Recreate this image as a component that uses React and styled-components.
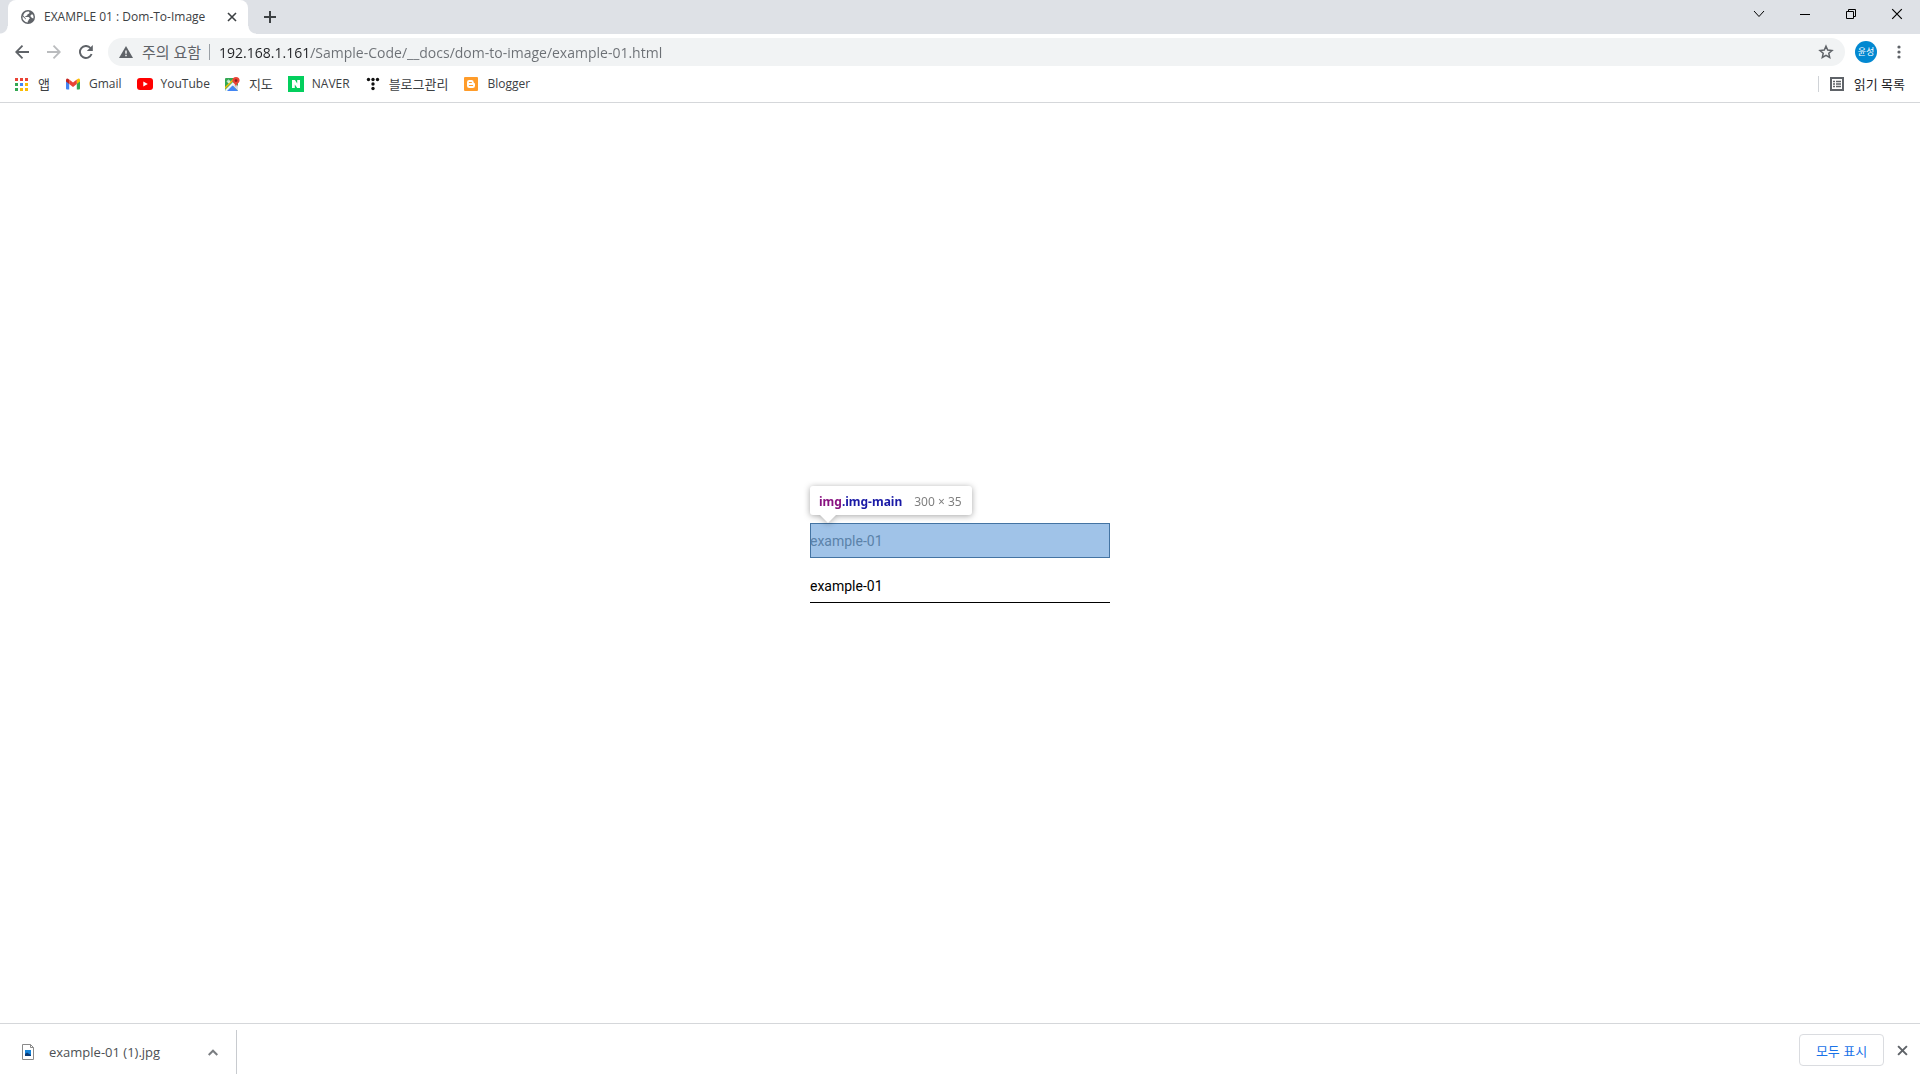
import React from "react"
import styled, { createGlobalStyle } from "styled-components"

const GlobalStyle = createGlobalStyle`
  * {
    box-sizing: border-box;
  }

  body {
    margin: 0;
    background: #ffffff;
    font-family: "Open Sans", "Noto Sans CJK KR", sans-serif;
    font-size: 12px;
    color: #3c4043;
  }

  button, input {
    font: inherit;
    color: inherit;
    border: 0;
    padding: 0;
    background: none;
  }

  svg {
    display: block;
    flex: none;
  }
`

const Window = styled.div`
  display: flex;
  flex-direction: column;
  min-height: 100vh;
`

const TabStrip = styled.header`
  display: flex;
  align-items: stretch;
  height: 34px;
  padding-left: 8px;
  background: #dee1e6;
`

const Tab = styled.div`
  position: relative;
  display: flex;
  align-items: center;
  width: 240px;
  padding: 0 9px 0 13px;
  border-radius: 8px 8px 0 0;
  background: #ffffff;

  /* flared feet on both sides of the active tab */
  &::before,
  &::after {
    content: "";
    position: absolute;
    bottom: 0;
    width: 8px;
    height: 8px;
  }
  &::before {
    right: 100%;
    background: radial-gradient(circle at 0 0, #dee1e6 7px, #ffffff 8px);
  }
  &::after {
    left: 100%;
    background: radial-gradient(circle at 100% 0, #dee1e6 7px, #ffffff 8px);
  }

  .title {
    flex: 1;
    margin-left: 9px;
    line-height: 18px;
    white-space: nowrap;
    overflow: hidden;
  }
`

const IconButton = styled.button`
  display: flex;
  align-items: center;
  justify-content: center;
  flex: none;
  width: ${({ $size }) => $size || 32}px;
  height: ${({ $size }) => $size || 32}px;
  color: ${({ $color }) => $color || "#5f6368"};
`

const WindowControls = styled.div`
  display: flex;
  align-items: center;
  margin-left: auto;

  button {
    width: 46px;
    height: 28px;
    margin-bottom: 6px;
    color: #000000;
  }
`

const NewTab = styled(IconButton)`
  margin-left: 8px;
  align-self: center;
  width: 28px;
  color: #3c4043;
`

const Toolbar = styled.div`
  display: flex;
  align-items: center;
  height: 36px;
  padding: 0 5px 0 6px;
`

const Omnibox = styled.div`
  display: flex;
  flex: 1;
  align-items: center;
  height: 28px;
  margin: 0 10px 0 6px;
  padding: 0 7px 0 11px;
  border-radius: 14px;
  background: #f1f3f4;
  color: #5f6368;

  .warning {
    padding: 0 8px 0 9px;
    font-size: 15px;
    line-height: 24px;
    white-space: nowrap;
  }

  .divider {
    width: 1px;
    height: 16px;
    margin-right: 9px;
    background: #9aa0a6;
  }
`

/* the host part is dark, the path after it is grey */
const Address = styled.input`
  flex: 1;
  min-width: 0;
  font-size: 14px;
  background: linear-gradient(to right, #202124 92px, #6b6f74 92px);
  background-clip: text;
  color: transparent;
  outline: none;
`

const Avatar = styled.button`
  flex: none;
  width: 22px;
  height: 22px;
  margin-right: 6px;
  border-radius: 50%;
  background: #0288d1;
  color: #ffffff;
  font-size: 9px;
  line-height: 22px;
  text-align: center;
`

const BookmarkBar = styled.nav`
  display: flex;
  align-items: center;
  height: 33px;
  padding: 0 15px 4px 14px;
  border-bottom: 1px solid #d5d7da;

  .divider {
    width: 1px;
    height: 16px;
    margin: 0 11px 0 auto;
    background: #d0d3d7;
  }
`

const Bookmark = styled.a`
  display: flex;
  align-items: center;
  gap: 8px;
  margin-right: 15px;
  color: #3c4043;
  line-height: 18px;
  text-decoration: none;
  white-space: nowrap;

  &:lang(ko) {
    font-size: 13px;
  }

  .icon {
    display: flex;
    justify-content: center;
    width: 16px;
  }
`

const ReadingList = styled.button`
  display: flex;
  align-items: center;
  gap: 10px;
  font-size: 13px;
  line-height: 18px;
  color: #202124;
`

const Page = styled.main`
  display: flex;
  flex: 1;
  flex-direction: column;
  align-items: center;
  justify-content: center;
  gap: 10px;
  font-family: Roboto, sans-serif;
  font-size: 14px;
  color: #000000;
`

const Sample = styled.div`
  position: relative;
  width: 300px;
  height: 35px;
  line-height: 36px;
  border-bottom: 1px solid #000000;
`

const Highlight = styled(Sample)`
  background: #a0c3e8;
  box-shadow: inset 0 0 0 1px #4474a3;
  border-bottom: 0;
  color: #5b82a9;
`

const Tooltip = styled.div`
  position: absolute;
  left: 0;
  bottom: 43px;
  display: flex;
  gap: 12px;
  height: 29px;
  padding: 0 10px 0 9px;
  border-radius: 3px;
  background: #ffffff;
  filter: drop-shadow(0 1px 3px rgba(0, 0, 0, 0.35));
  font-family: "Noto Sans", sans-serif;
  font-size: 12px;
  line-height: 32px;
  white-space: nowrap;
  color: #808080;

  &::after {
    content: "";
    position: absolute;
    top: 100%;
    left: 10px;
    border: 8px solid transparent;
    border-top-color: #ffffff;
    border-bottom: 0;
  }

  b {
    color: #1a1aa6;
  }

  .tag {
    color: #881280;
  }
`

const DownloadShelf = styled.footer`
  display: flex;
  align-items: center;
  height: 57px;
  padding-right: 8px;
  border-top: 1px solid #d5d7da;
`

const Download = styled.div`
  display: flex;
  align-items: center;
  width: 237px;
  height: 44px;
  padding: 0 12px 0 22px;
  border-right: 1px solid #c8cbcf;
  font-size: 13px;

  a {
    display: flex;
    flex: 1;
    align-items: center;
    gap: 15px;
    color: #4c5054;
    text-decoration: none;
  }
`

const ShelfActions = styled.div`
  display: flex;
  align-items: center;
  gap: 8px;
  margin: 0 0 4px auto;
`

const ShowAll = styled.button`
  width: 85px;
  height: 32px;
  border: 1px solid #dadce0;
  border-radius: 4px;
  color: #1a73e8;
  font-size: 13px;
`

const Cross = ({ size, width }) => (
  <svg width={size} height={size} viewBox="0 0 10 10" stroke="currentColor" strokeWidth={width}>
    <path d="M1 1l8 8M9 1l-8 8" />
  </svg>
)

const Globe = () => (
  <svg width="14" height="14" viewBox="0 0 14 14">
    <circle cx="7" cy="7" r="7" fill="#5f6368" />
    <path d="M7.800 1.600Q9 2 8.200 3.600L6.600 4.200 6.200 5.600 4.300 6.200V7H7.600Q8.800 7.400 8.800 9H8Q8 10.500 6.800 11v1.400A5.500 5.500 0 0 1 1.500 6.200L4.800 9.600V8.400L2.200 5.600A5.500 5.500 0 0 1 7.800 1.600Z" fill="#fff" />
    <path d="M9.600 5.400l1.200-1.200 1.200.6.500 2-.2 1.800-1.200-.6-1.500-1.200z" fill="#fff" />
  </svg>
)

const Apps = () => (
  <svg width="14" height="14" viewBox="0 0 14 14">
    {["#ea4335", "#ea4335", "#ea4335", "#34a853", "#4285f4", "#fbbc04", "#34a853", "#fbbc04", "#fbbc04"].map((fill, i) => (
      <rect key={i} x={(i % 3) * 5} y={Math.floor(i / 3) * 5 + 1} width="3" height="3" fill={fill} />
    ))}
  </svg>
)

const Gmail = () => (
  <svg width="14" height="12" viewBox="0 0 14 12">
    <path d="M0 2v8.500Q0 11.500 1 11.500h2.200V4z" fill="#4285f4" />
    <path d="M14 2v8.500q0 1-1 1h-2.200V4z" fill="#34a853" />
    <path d="M10.800 1.600L12 .8Q14 0 14 2.300v1.200L10.800 6z" fill="#fbbc04" />
    <path d="M3.200 1.600L2 .8Q0 0 0 2.300v1.200L3.200 6z" fill="#c5221f" />
    <path d="M3.200 1.600L7 4.600l3.800-3V6L7 9 3.200 6z" fill="#ea4335" />
  </svg>
)

const YouTube = () => (
  <svg width="16" height="12" viewBox="0 0 16 12">
    <rect width="16" height="12" rx="3" fill="#ff0000" />
    <path d="M6.300 3.400v5.200L10.800 6z" fill="#fff" />
  </svg>
)

const Maps = () => (
  <svg width="15" height="14" viewBox="0 0 15 14">
    <rect y="1" width="13" height="13" rx="1" fill="#34a853" />
    <path d="M7 8l3-2 3 3v5z" fill="#dadce0" />
    <path d="M0 12L11 1H9L0 10z" fill="#fbbc04" />
    <path d="M0 13L8 5l2 2-7 7H1Q0 14 0 13z" fill="#f1f3f4" />
    <path d="M2 14L7.500 8.500 13 14z" fill="#4285f4" />
    <path d="M5.300 4.200H3.700v1h.8A1.200 1.200 0 1 1 4.300 3.500" stroke="#fff" fill="none" />
    <path d="M11 0a3.600 3.600 0 0 1 3.600 3.600C14.600 6 11.600 6.500 11 10 10.400 6.500 7.400 6 7.400 3.600A3.600 3.600 0 0 1 11 0z" fill="#ea4335" />
    <circle cx="11" cy="3.600" r="1.300" fill="#8c1d18" />
  </svg>
)

const Naver = () => (
  <svg width="16" height="16" viewBox="0 0 16 16">
    <rect width="16" height="16" fill="#03cf5d" />
    <path d="M4 4h3l2.200 3.500V4h2.800v8H9.200L6.800 8.500V12H4z" fill="#fff" />
  </svg>
)

const Tistory = () => (
  <svg width="14" height="14" viewBox="0 0 14 14" fill="#111">
    {[[2.500, 2.500], [7, 2.500], [11.500, 2.500], [7, 7], [7, 11.500]].map(([x, y]) => (
      <circle key={`${x}-${y}`} cx={x} cy={y} r="1.700" />
    ))}
  </svg>
)

const Blogger = () => (
  <svg width="14" height="14" viewBox="0 0 14 14">
    <rect width="14" height="14" rx="1" fill="#ff9c2a" />
    <path d="M5.200 3h2.300a2.200 2.200 0 0 1 2.200 2.200q0 1 1.300 1.300v2.300A2.200 2.200 0 0 1 8.800 11H5.200A2.200 2.200 0 0 1 3 8.800V5.200A2.200 2.200 0 0 1 5.200 3z" fill="#fff" />
    <path d="M5.400 5.500h2M5.400 8.500h3.200" stroke="#ff9c2a" strokeWidth="1.200" strokeLinecap="round" />
  </svg>
)

const bookmarks = [
  { label: "앱", lang: "ko", icon: <Apps /> },
  { label: "Gmail", lang: "en", icon: <Gmail /> },
  { label: "YouTube", lang: "en", icon: <YouTube /> },
  { label: "지도", lang: "ko", icon: <Maps /> },
  { label: "NAVER", lang: "en", icon: <Naver /> },
  { label: "블로그관리", lang: "ko", icon: <Tistory /> },
  { label: "Blogger", lang: "en", icon: <Blogger /> },
]

const App = () => {
  return (
    <Window>
      <GlobalStyle />
      <TabStrip>
        <Tab>
          <Globe />
          <span className="title">EXAMPLE 01 : Dom-To-Image</span>
          <IconButton $size={14} $color="#3c4043" aria-label="Close tab">
            <Cross size={10} width={1.600} />
          </IconButton>
        </Tab>
        <NewTab aria-label="New tab">
          <svg width="12" height="12" viewBox="0 0 12 12" stroke="currentColor" strokeWidth="2">
            <path d="M6 0v12M0 6h12" />
          </svg>
        </NewTab>
        <WindowControls>
          <IconButton aria-label="Search tabs">
            <svg width="12" height="8" viewBox="0 0 12 8" fill="none" stroke="currentColor">
              <path d="M1 1l5 5.500L11 1" />
            </svg>
          </IconButton>
          <IconButton aria-label="Minimize">
            <svg width="10" height="1" viewBox="0 0 10 1">
              <path d="M0 0h10v1H0z" />
            </svg>
          </IconButton>
          <IconButton aria-label="Restore">
            <svg width="10" height="10" viewBox="0 0 10 10" fill="none" stroke="currentColor">
              <path d="M.5 2.500h7v7h-7zM2.500 2.500v-2h7v7h-2" />
            </svg>
          </IconButton>
          <IconButton aria-label="Close">
            <Cross size={12} width={1} />
          </IconButton>
        </WindowControls>
      </TabStrip>

      <Toolbar>
        <IconButton aria-label="Back">
          <svg width="14" height="14" viewBox="0 0 14 14" fill="none" stroke="currentColor" strokeWidth="1.800">
            <path d="M14 7H1.500M7.500 .7L1.200 7l6.300 6.300" />
          </svg>
        </IconButton>
        <IconButton $color="#babcbe" aria-label="Forward">
          <svg width="14" height="14" viewBox="0 0 14 14" fill="none" stroke="currentColor" strokeWidth="1.800">
            <path d="M0 7h12.500M6.500 .7L12.800 7l-6.300 6.300" />
          </svg>
        </IconButton>
        <IconButton aria-label="Reload">
          <svg width="14" height="14" viewBox="0 0 14 14">
            <path d="M12.600 9A6 6 0 1 1 11.500 3" fill="none" stroke="currentColor" strokeWidth="1.900" />
            <path d="M13.800 0v6H7.800z" fill="currentColor" />
          </svg>
        </IconButton>
        <Omnibox>
          <svg width="14" height="12" viewBox="0 0 14 12">
            <path d="M7 0l7 12H0z" fill="currentColor" />
            <path d="M6.300 4.500h1.400v3.200H6.300zM6.300 8.800h1.400v1.400H6.300z" fill="#fff" />
          </svg>
          <span className="warning">주의 요함</span>
          <span className="divider" />
          <Address type="text" aria-label="Address" defaultValue="192.168.1.161/Sample-Code/__docs/dom-to-image/example-01.html" />
          <IconButton $size={24} aria-label="Bookmark this page">
            <svg width="16" height="16" viewBox="0 0 16 16" fill="none" stroke="currentColor" strokeWidth="1.500">
              <path d="M8 2.200l1.700 3.900 4.300.4-3.200 2.800.9 4.200L8 11.300l-3.700 2.200.9-4.200L2 6.500l4.300-.4z" />
            </svg>
          </IconButton>
        </Omnibox>
        <Avatar aria-label="Profile">윤성</Avatar>
        <IconButton aria-label="Menu">
          <svg width="4" height="14" viewBox="0 0 4 14" fill="currentColor">
            <circle cx="2" cy="2" r="1.600" />
            <circle cx="2" cy="7" r="1.600" />
            <circle cx="2" cy="12" r="1.600" />
          </svg>
        </IconButton>
      </Toolbar>

      <BookmarkBar>
        {bookmarks.map(({ label, lang, icon }) => (
          <Bookmark key={label} lang={lang} href="#">
            <span className="icon">{icon}</span>
            {label}
          </Bookmark>
        ))}
        <span className="divider" />
        <ReadingList>
          <svg width="14" height="14" viewBox="0 0 14 14" fill="none" stroke="#5f6368">
            <rect x="1" y="1" width="12" height="12" strokeWidth="2" />
            <path d="M3 4.500h2M6 4.500h5M3 7h2M6 7h5M3 9.500h2M6 9.500h5" strokeWidth="1.300" />
          </svg>
          읽기 목록
        </ReadingList>
      </BookmarkBar>

      <Page>
        <Highlight>
          <Tooltip>
            <b><span className="tag">img</span>.img-main</b>
            <span>300 × 35</span>
          </Tooltip>
          example-01
        </Highlight>
        <Sample>example-01</Sample>
      </Page>

      <DownloadShelf>
        <Download>
          <a href="#">
            <svg width="12" height="16" viewBox="0 0 12 16">
              <path d="M.5 .5h8l3 3v12H.5z" fill="#fff" stroke="#8a8a8a" />
              <path d="M8.500 .5v3h3" fill="none" stroke="#8a8a8a" />
              <rect x="3" y="6" width="6" height="6" fill="#1683d8" />
              <path d="M3 10l2-1.500L9 11v1H3z" fill="#0b3c78" />
            </svg>
            example-01 (1).jpg
          </a>
          <IconButton $size={22} aria-label="Download options">
            <svg width="10" height="7" viewBox="0 0 10 7" fill="none" stroke="#7a7d81" strokeWidth="2">
              <path d="M.7 6L5 1.700 9.300 6" />
            </svg>
          </IconButton>
        </Download>
        <ShelfActions>
          <ShowAll>모두 표시</ShowAll>
          <IconButton $size={20} aria-label="Close downloads">
            <Cross size={11} width={1.800} />
          </IconButton>
        </ShelfActions>
      </DownloadShelf>
    </Window>
  )
}

export default App
